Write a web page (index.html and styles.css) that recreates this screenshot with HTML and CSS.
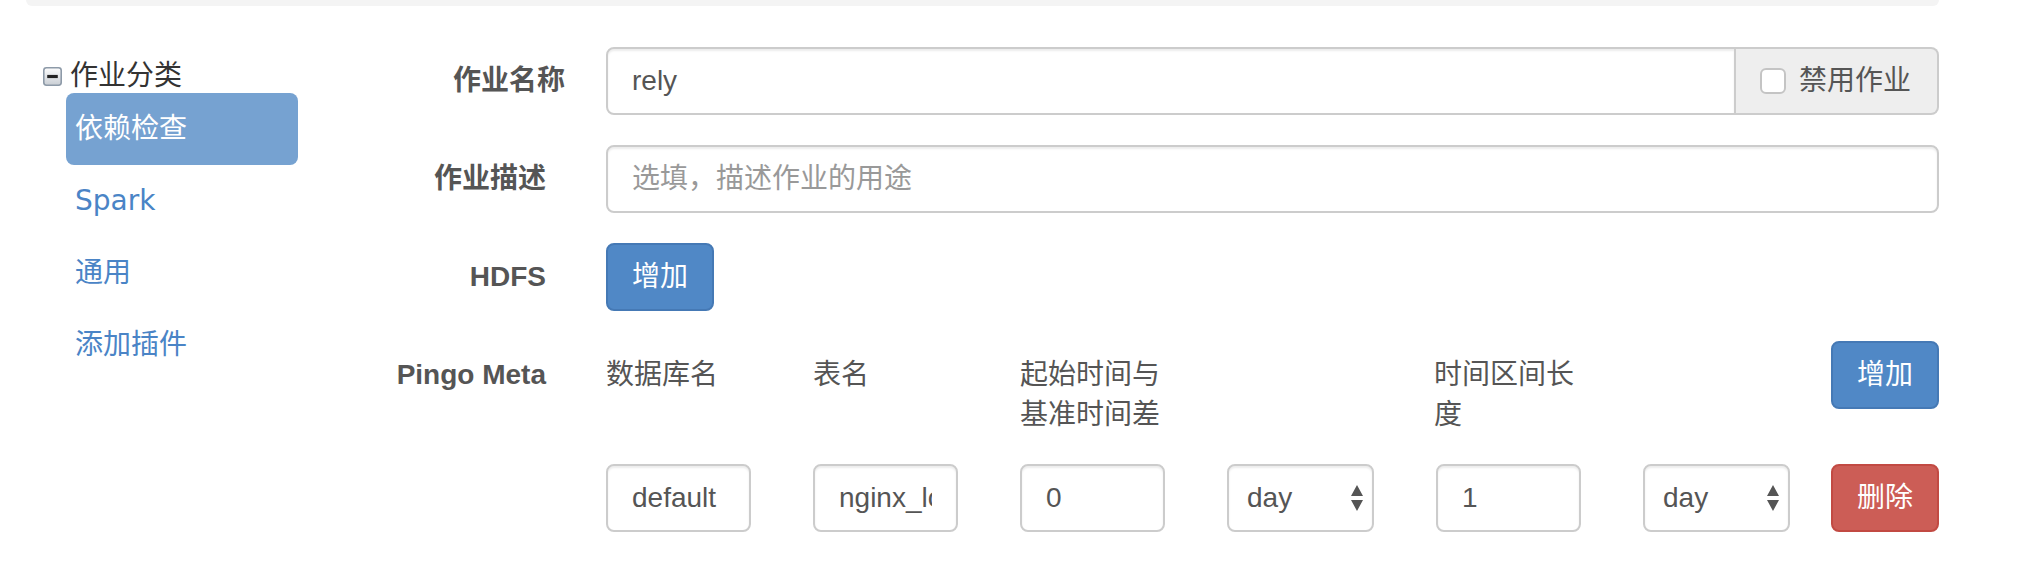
FILE: index.html
```html
<!DOCTYPE html>
<html lang="zh-CN">
<head>
    <meta charset="UTF-8">
    <title>作业编辑</title>
    <link rel="stylesheet" href="styles.css">
</head>
<body>
    <div class="well-bottom"></div>

    <div class="page">
        <div class="sidebar">
            <div class="tree-root">
                <svg class="tree-switch" width="19" height="19" viewBox="0 0 18 18">
                    <defs>
                        <linearGradient id="sw" x1="0" y1="0" x2="0" y2="1">
                            <stop offset="0" stop-color="#fdfdfd"/>
                            <stop offset="1" stop-color="#c9ced4"/>
                        </linearGradient>
                    </defs>
                    <rect x="0.75" y="0.75" width="16.5" height="16.5" rx="2.5" fill="url(#sw)" stroke="#8d9aa8" stroke-width="1.5"/>
                    <rect x="4" y="7.5" width="10" height="3" fill="#222"/>
                </svg>
                <span>作业分类</span>
            </div>
            <ul class="tree-list">
                <li class="active">依赖检查</li>
                <li class="latin">Spark</li>
                <li>通用</li>
                <li>添加插件</li>
            </ul>
        </div>

        <form class="job-form">
            <div class="form-row">
                <label class="control-label label-first">作业名称</label>
                <div class="input-group">
                    <input class="form-control" type="text" value="rely">
                    <span class="addon">
                        <span class="check"></span>
                        禁用作业
                    </span>
                </div>
            </div>

            <div class="form-row">
                <label class="control-label">作业描述</label>
                <input class="form-control" type="text" placeholder="选填，描述作业的用途">
            </div>

            <div class="form-row">
                <label class="control-label">HDFS</label>
                <div><button type="button" class="btn btn-primary">增加</button></div>
            </div>

            <div class="form-row">
                <label class="control-label">Pingo Meta</label>
                <div class="meta">
                    <div class="meta-line meta-head">
                        <div class="cell">数据库名</div>
                        <div class="cell">表名</div>
                        <div class="cell">起始时间与基准时间差</div>
                        <div class="cell"></div>
                        <div class="cell">时间区间长度</div>
                        <div class="cell"></div>
                        <button type="button" class="btn btn-primary push-right">增加</button>
                    </div>
                    <div class="meta-line">
                        <div class="cell"><input class="form-control" type="text" value="default"></div>
                        <div class="cell"><input class="form-control" type="text" value="nginx_log"></div>
                        <div class="cell"><input class="form-control" type="text" value="0"></div>
                        <div class="cell select-wrap">
                            <select class="form-control"><option>day</option><option>hour</option></select>
                            <svg class="arrows" width="12" height="26" viewBox="0 0 12 26"><path d="M6 0 L12 11 L0 11 Z M0 15 L12 15 L6 26 Z" fill="#555"/></svg>
                        </div>
                        <div class="cell"><input class="form-control" type="text" value="1"></div>
                        <div class="cell select-wrap">
                            <select class="form-control"><option>day</option><option>hour</option></select>
                            <svg class="arrows" width="12" height="26" viewBox="0 0 12 26"><path d="M6 0 L12 11 L0 11 Z M0 15 L12 15 L6 26 Z" fill="#555"/></svg>
                        </div>
                        <button type="button" class="btn btn-danger push-right">删除</button>
                    </div>
                </div>
            </div>
        </form>
    </div>
</body>
</html>
```

FILE: styles.css
```css
body {
    margin: 0;
    font-family: "Liberation Sans", "Noto Sans CJK SC", sans-serif;
    font-size: 28px;
    line-height: 40px;
    color: #333;
    background-color: #fff;
}
.well-bottom {
    height: 6px;
    margin: 0 99px 0 26px;
    background-color: #f4f4f4;
    border-radius: 0 0 10px 10px;
}
.page {
    display: flex;
}
.sidebar {
    width: 300px;
    padding-top: 50px;
    font-family: "DejaVu Sans", "Noto Sans CJK SC", sans-serif;
    font-size: 28px;
}
.tree-root {
    display: flex;
    align-items: center;
    gap: 8px;
    padding-left: 43px;
    height: 40px;
    margin-bottom: -3px;
    color: #333;
}
.tree-list {
    list-style: none;
    margin: 0;
    padding: 0 0 0 66px;
}
.tree-list li {
    width: 232px;
    height: 72px;
    line-height: 72px;
    padding-left: 9px;
    box-sizing: border-box;
    color: #4a84c6;
    border-radius: 8px;
}
.tree-list li.active {
    background-color: #76a2d1;
    color: #fff;
}
.job-form {
    flex: 1;
    margin-right: 99px;
    padding-top: 41px;
}
.form-row {
    display: grid;
    grid-template-columns: 246px 1fr;
    column-gap: 60px;
    margin-bottom: 30px;
}
.control-label {
    text-align: right;
    font-weight: bold;
    color: #555;
    padding-top: 14px;
}
.label-first {
    margin-right: -19px;
}
.form-control {
    display: block;
    width: 100%;
    height: 68px;
    box-sizing: border-box;
    padding: 12px 24px;
    font-family: inherit;
    font-size: 28px;
    line-height: 40px;
    color: #555;
    background-color: #fff;
    border: 2px solid #ccc;
    border-radius: 8px;
    box-shadow: inset 0 2px 2px rgba(0, 0, 0, 0.075);
    outline: none;
}
.form-control::placeholder {
    color: #999;
}
.input-group {
    display: flex;
}
.input-group .form-control {
    flex: 1;
    border-radius: 8px 0 0 8px;
}
.addon {
    display: flex;
    align-items: center;
    gap: 13px;
    width: 203px;
    box-sizing: border-box;
    padding: 0 24px;
    color: #555;
    background-color: #eee;
    border: 2px solid #ccc;
    border-left: none;
    border-radius: 0 8px 8px 0;
}
.check {
    width: 26px;
    height: 26px;
    box-sizing: border-box;
    border: 2px solid #c4c4c4;
    border-radius: 6px;
    background-color: #fff;
}
.btn {
    height: 68px;
    padding: 12px 24px;
    font-family: inherit;
    font-size: 28px;
    line-height: 40px;
    color: #fff;
    border: 2px solid transparent;
    border-radius: 8px;
    cursor: pointer;
}
.btn-primary {
    background-color: #5088c6;
    border-color: #4579b5;
}
.btn-danger {
    background-color: #cc5d56;
    border-color: #c24a43;
}
.meta-line {
    display: flex;
    align-items: flex-start;
}
.meta-head {
    margin-bottom: 29px;
    color: #555;
}
.meta-head .cell {
    padding-top: 14px;
}
.cell {
    width: 145px;
    margin-right: 62px;
}
.cell:nth-child(6) {
    margin-right: 0;
}
.push-right {
    margin-left: auto;
}
.select-wrap {
    position: relative;
    width: 147px;
}
.select-wrap select {
    appearance: none;
    -webkit-appearance: none;
    padding-left: 18px;
}
.arrows {
    position: absolute;
    right: 11px;
    top: 21px;
    pointer-events: none;
}
```
